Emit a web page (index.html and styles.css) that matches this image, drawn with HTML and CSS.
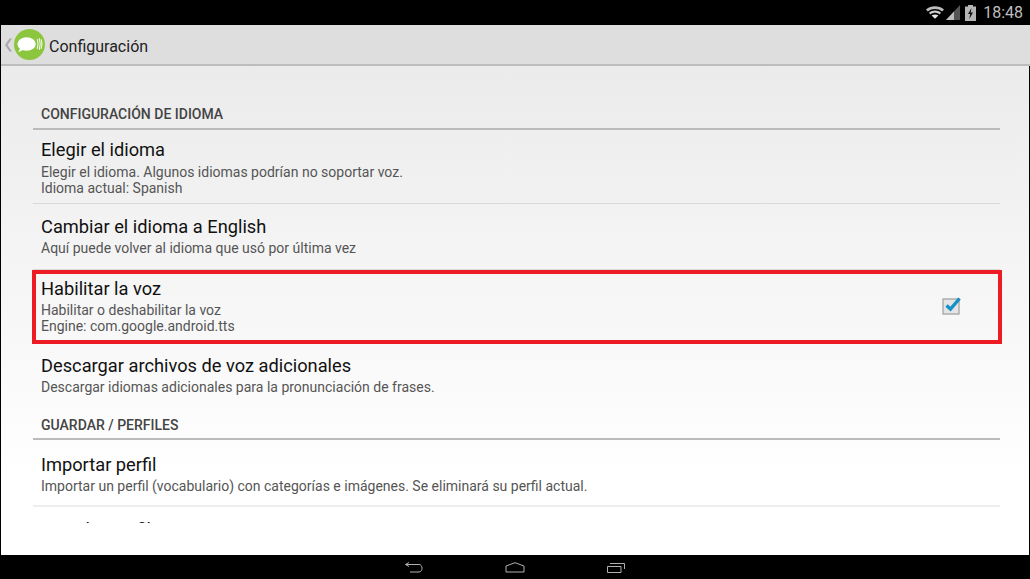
FILE: index.html
```html
<!DOCTYPE html>
<html lang="es">
	<head>
		<meta charset="UTF-8">
		<title>Configuración</title>
		<link rel="stylesheet" href="styles.css">
	</head>
	<body>
		<div class="status-bar">
			<svg class="icon-wifi" width="18" height="15" viewBox="0 0 20 15">
				<path d="M0 4.2C5.500-.6 14.500-.6 20 4.200L18 6.400C13.500 2.700 6.500 2.700 2 6.400Z" fill="#bdbdbd"/>
				<path d="M3.300 7.700C7 4.600 13 4.600 16.700 7.700L15 9.600C12 7.300 8 7.300 5 9.600Z" fill="#d0d0d0"/>
				<path d="M6.200 10.800C8.500 9.200 11.500 9.200 13.800 10.800L10 14.500Z" fill="#e6e6e6"/>
			</svg>
			<svg class="icon-signal" width="14" height="15" viewBox="0 0 14 15">
				<path d="M14 0V15H0Z" fill="#555"/>
				<path d="M8 6.500V15H0Z" fill="#bdbdbd"/>
			</svg>
			<svg class="icon-battery" width="11" height="16" viewBox="0 0 11 16">
				<path d="M3 0H8V1.500H11V16H0V1.500H3Z" fill="#b5b5b5"/>
				<path d="M6.500 3L3 9H5.200L4.300 14L8 7.500H5.700Z" fill="#111"/>
			</svg>
			<span class="clock">18:48</span>
		</div>

		<div class="action-bar">
			<svg class="back-arrow" width="8" height="14" viewBox="0 0 8 14">
				<path d="M7 0.500L2.500 7L7 13.500H4.500L0 7L4.500 0.500Z" fill="#a8a8a8"/>
			</svg>
			<svg class="app-logo" width="31" height="31" viewBox="0 0 32 32">
				<circle cx="16" cy="16" r="16" fill="#8cc63f"/>
				<ellipse cx="13" cy="15.500" rx="9.500" ry="7" fill="#fff"/>
				<path d="M7 18L4.500 24L11.500 20.500Z" fill="#fff"/>
				<path d="M24 10.500Q25.800 15.500 24 20.500M26 9.500Q28.200 15.500 26 21.500M28 10.500Q29.800 15.500 28 20.500" fill="none" stroke="#fff" stroke-width="1"/>
			</svg>
			<span class="action-title">Configuración</span>
		</div>

		<div class="content">
			<div class="list">
				<div class="section">CONFIGURACIÓN DE IDIOMA</div>

				<div class="row row-first">
					<div class="row-title">Elegir el idioma</div>
					<div class="row-sub">Elegir el idioma. Algunos idiomas podrían no soportar voz.<br>Idioma actual: Spanish</div>
				</div>

				<div class="row row-second">
					<div class="row-title">Cambiar el idioma a English</div>
					<div class="row-sub">Aquí puede volver al idioma que usó por última vez</div>
				</div>

				<div class="row row-voice">
					<div class="row-text">
						<div class="row-title">Habilitar la voz</div>
						<div class="row-sub">Habilitar o deshabilitar la voz<br>Engine: com.google.android.tts</div>
					</div>
					<svg class="check" width="20" height="19" viewBox="0 0 20 19">
						<rect x="1" y="3" width="16" height="15" fill="#e4e4e4" stroke="#a9a9a9" stroke-width="1.400"/>
						<path d="M4.500 9.500L8.500 13L17.500 2.500" fill="none" stroke="#1690c8" stroke-width="3.400"/>
					</svg>
					<div class="highlight"></div>
				</div>

				<div class="row row-plain">
					<div class="row-title">Descargar archivos de voz adicionales</div>
					<div class="row-sub">Descargar idiomas adicionales para la pronunciación de frases.</div>
				</div>

				<div class="section section-second">GUARDAR / PERFILES</div>

				<div class="row row-import">
					<div class="row-title">Importar perfil</div>
					<div class="row-sub">Importar un perfil (vocabulario) con categorías e imágenes. Se eliminará su perfil actual.</div>
				</div>

				<div class="row row-last">
					<div class="row-title">Guardar perfil</div>
				</div>
			</div>
		</div>

		<div class="nav-bar">
			<svg width="18" height="11" viewBox="0 0 18 11">
				<path d="M0.500 2.500H14C18 2.500 18 10 14 10H5M0.500 2.500L4 0.500M0.500 2.500L4 4.500" fill="none" stroke="#b0b0b0" stroke-width="1"/>
			</svg>
			<svg width="20" height="11" viewBox="0 0 20 11">
				<path d="M1 4L10 0.700L19 4V10H1Z" fill="none" stroke="#b0b0b0" stroke-width="1"/>
			</svg>
			<svg width="18" height="11" viewBox="0 0 18 11">
				<path d="M0.500 4.500H14V10.500H0.500Z" fill="none" stroke="#b0b0b0" stroke-width="1"/>
				<path d="M3 1.500H17.500V7" fill="none" stroke="#b0b0b0" stroke-width="1"/>
			</svg>
		</div>
	</body>
</html>
```

FILE: styles.css
```css
html, body {
	margin: 0;
	height: 579px;
	overflow: hidden;
}

body {
	display: flex;
	flex-direction: column;
	background-color: #000;
	font-family: Roboto, "Liberation Sans", sans-serif;
}

.status-bar {
	height: 25px;
	flex: none;
	display: flex;
	align-items: center;
	justify-content: flex-end;
	padding-right: 7px;
	background-color: #000;
}

.icon-wifi {
	margin-right: 2px;
}

.icon-signal {
	margin-right: 5px;
}

.clock {
	margin-left: 7px;
	font-size: 16px;
	color: #bdbdbd;
}

.action-bar {
	height: 41px;
	flex: none;
	box-sizing: border-box;
	display: flex;
	align-items: center;
	margin-left: 1px;
	padding-left: 4px;
	background-color: #dedede;
	border-bottom: 2px solid #bdbdbd;
}

.back-arrow {
	margin-right: 1px;
}

.action-title {
	margin: 3px 0 0 4px;
	font-size: 16px;
	color: #222;
}

.content {
	height: 489px;
	flex: none;
	margin: 0 1px;
	background: linear-gradient(#ebebeb, #fff 85%);
}

.list {
	height: 457px;
	padding: 0 29px 0 32px;
	overflow: hidden;
}

.section {
	height: 30px;
	box-sizing: border-box;
	margin-top: 34px;
	padding: 6px 0 0 8px;
	font-size: 14px;
	font-weight: 500;
	line-height: 16px;
	color: #444;
	border-bottom: 2px solid #bbb;
}

.section-second {
	margin-top: 22px;
	padding-top: 7px;
}

.row {
	box-sizing: border-box;
	padding: 9px 8px 0;
	border-bottom: 1px solid #d9d9d9;
}

.row-first {
	height: 74px;
}

.row-first .row-sub {
	margin-top: 3px;
}

.row-second {
	height: 66px;
	padding-top: 12px;
}

.row-voice {
	position: relative;
	height: 73px;
	display: flex;
	align-items: center;
	justify-content: space-between;
	padding-top: 0;
	padding-bottom: 2px;
	border-bottom: 0;
}

.row-plain {
	height: 45px;
	padding-top: 12px;
	border-bottom: 0;
}

.row-import {
	height: 67px;
	padding-top: 14px;
	border-bottom: 2px solid #eee;
}

.row-last {
	padding-top: 12px;
	border-bottom: 0;
}

.row-title {
	font-size: 18.25px;
	line-height: 22px;
	color: #111;
}

.row-sub {
	margin-top: 2px;
	font-size: 14px;
	line-height: 16px;
	color: #555;
}

.check {
	margin-right: 30px;
}

.highlight {
	position: absolute;
	top: 0;
	left: -1px;
	width: 970px;
	height: 74px;
	box-sizing: border-box;
	border: 4px solid #ed1c24;
}

.nav-bar {
	height: 24px;
	flex: none;
	display: flex;
	align-items: center;
	justify-content: center;
	gap: 82px;
	background-color: #000;
}
```
